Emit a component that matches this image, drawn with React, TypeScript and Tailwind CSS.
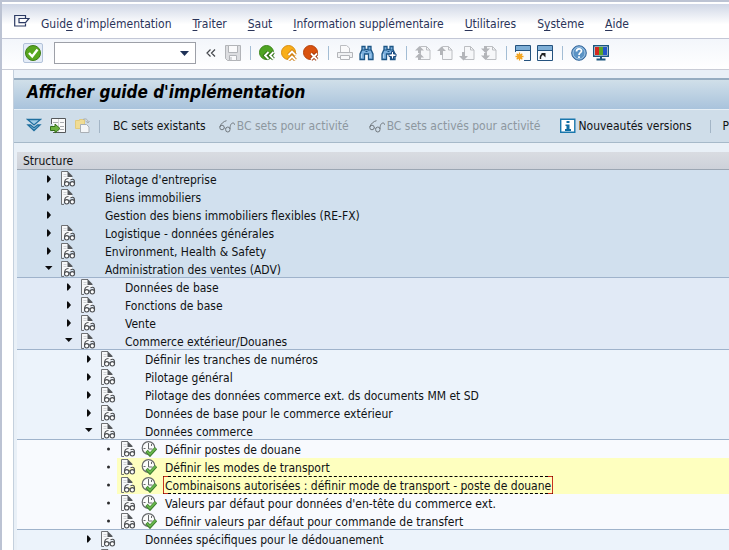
import type { ReactNode } from "react";

type Row = {
  level: 0 | 1 | 2 | 3;
  label: string;
  state: "open" | "closed" | "leaf";
  noDoc?: boolean;
  marked?: boolean;
  focused?: boolean;
  groupEnd?: boolean;
};

const rows: Row[] = [
  { level: 0, label: "Pilotage d'entreprise", state: "closed" },
  { level: 0, label: "Biens immobiliers", state: "closed" },
  { level: 0, label: "Gestion des biens immobiliers flexibles (RE-FX)", state: "closed", noDoc: true },
  { level: 0, label: "Logistique - données générales", state: "closed" },
  { level: 0, label: "Environment, Health & Safety", state: "closed" },
  { level: 0, label: "Administration des ventes (ADV)", state: "open", groupEnd: true },
  { level: 1, label: "Données de base", state: "closed" },
  { level: 1, label: "Fonctions de base", state: "closed" },
  { level: 1, label: "Vente", state: "closed" },
  { level: 1, label: "Commerce extérieur/Douanes", state: "open", groupEnd: true },
  { level: 2, label: "Définir les tranches de numéros", state: "closed" },
  { level: 2, label: "Pilotage général", state: "closed" },
  { level: 2, label: "Pilotage des données commerce ext. ds documents MM et SD", state: "closed" },
  { level: 2, label: "Données de base pour le commerce extérieur", state: "closed" },
  { level: 2, label: "Données commerce", state: "open", groupEnd: true },
  { level: 3, label: "Définir postes de douane", state: "leaf" },
  { level: 3, label: "Définir les modes de transport", state: "leaf", marked: true },
  { level: 3, label: "Combinaisons autorisées : définir mode de transport - poste de douane", state: "leaf", marked: true, focused: true },
  { level: 3, label: "Valeurs par défaut pour données d'en-tête du commerce ext.", state: "leaf" },
  { level: 3, label: "Définir valeurs par défaut pour commande de transfert", state: "leaf", groupEnd: true },
  { level: 2, label: "Données spécifiques pour le dédouanement", state: "closed" },
  { level: 2, label: "", state: "closed" },
];

const levelStyle = [
  "pl-[27px] bg-[#d1e0ee]",
  "pl-[47px] bg-[#e1eaf6]",
  "pl-[67px] bg-[#ecf3fb]",
  "pl-[87px] bg-[#f8fafe]",
];

function Svg({ children, w = 16, h = 16 }: { children: ReactNode; w?: number; h?: number }) {
  return (
    <svg width={w} height={h} viewBox={`0 0 ${w} ${h}`} fill="none" className="block shrink-0" aria-hidden="true">
      {children}
    </svg>
  );
}

function DocIcon() {
  return (
    <Svg>
      <path d="M1.500 15V.5H7.500l4.500 4.500v3" fill="#f7f8f9" />
      <path d="M4 15.500H1.500V.5H8" stroke="#707275" />
      <path d="M7.500 0 12.500 5V6H7.500Z" fill="#55585c" />
      <path d="M3.500 3.500h3M3.500 5.500h3" stroke="#d0d3d6" />
      <path d="M8.500 7.500C5.500 7.500 4.500 9.500 4.500 12.500" stroke="#4c4e51" strokeWidth="1.100" />
      <ellipse cx="6.700" cy="12.800" rx="2.200" ry="2.200" fill="#fff" stroke="#4c4e51" strokeWidth="1.100" />
      <ellipse cx="12.300" cy="12.800" rx="2.200" ry="2.200" fill="#fff" stroke="#4c4e51" strokeWidth="1.100" />
      <path d="M10.500 8.700c2.500-1 4-.2 4 2.300v2M8.800 12h1.500" stroke="#4c4e51" strokeWidth="1.100" />
    </Svg>
  );
}

function ClockIcon() {
  return (
    <Svg>
      <circle cx="7.500" cy="7" r="6.300" fill="#fbfcfb" stroke="#66696b" strokeWidth="1.200" />
      <path d="M7.500 2v6h4M2.500 7.500h2M10.500 3v2" stroke="#66696b" />
      <path d="m5.500 10 3.500 3.700L15 7.200" stroke="#3f7f30" strokeWidth="3.400" />
      <path d="m6 10.300 3 3 5.500-6" stroke="#69b84c" strokeWidth="1.800" />
    </Svg>
  );
}

function Glasses() {
  return (
    <Svg h={13}>
      <path d="M7.500.7C5 1.200 1.500 3.700.8 7.200" stroke="#71787e" />
      <ellipse cx="3" cy="7.500" rx="2.200" ry="2.300" stroke="#71787e" />
      <ellipse cx="8.800" cy="9.500" rx="2.200" ry="2.500" stroke="#71787e" />
      <path d="M5.200 7.500 6.600 8.700M11 9c0-3.500 1-6 3-6 1.200 0 1.500.7 1.500 1.700" stroke="#71787e" />
    </Svg>
  );
}

function Sep() {
  return (
    <span className="flex w-1.5 shrink-0 justify-center">
      <span className="h-[14px] w-px bg-[#a3bdd4]" />
    </span>
  );
}

function Tool({ label, children }: { label: string; children: ReactNode }) {
  return (
    <button type="button" aria-label={label} className="shrink-0">
      {children}
    </button>
  );
}

function Binoculars({ plus = false }: { plus?: boolean }) {
  return (
    <Svg>
      <path
        d="M3 1.500h3v3h3v-3h3v3l2 4.500v5.500H9.500V9h-4v5.500H1V9l2-4.500Z"
        fill="#7fb2df"
        stroke="#1d5686"
        strokeWidth="1.300"
      />
      <path d="M3 5h3M9 5h3M6.500 6.500h2" stroke="#1d5686" />
      <path d="M2.500 9v4M11 9v4" stroke="#b5d6f1" />
      {plus && (
        <path d="M10.500 6.500h2v2.500H15v2.500h-2.500V14h-2v-2.500H8V9h2.500Z" fill="#fff" stroke="#1d4a80" />
      )}
    </Svg>
  );
}

function PageNav({ kind }: { kind: "first" | "prev" | "next" | "last" }) {
  return (
    <Svg>
      <path d="M5.500 1.500h6l3.500 3.500v9.500H5.500Z" fill="#f6f7f9" stroke="#bcbec2" />
      <path d="M11.500 1.500V5H15" stroke="#bcbec2" />
      {kind === "first" && <path d="M0 5.500 4.500 1 9 5.500H6V8h3L4.500 8 9 12.500H6V15H3v-2.500H0L4.500 8H3V5.500Z" fill="#b3b5b9" />}
      {kind === "prev" && <path d="M0 6 4.500 1.500 9 6H6v4H3V6Z" fill="#b3b5b9" />}
      {kind === "next" && <path d="M3 7h3v4h3l-4.500 4.500L0 11h3Z" fill="#b3b5b9" />}
      {kind === "last" && <path d="M3 1h3v2.500h3L4.500 8H6v2.500h3L4.500 15 0 10.500h3V8h1.500L0 3.500h3Z" fill="#b3b5b9" />}
    </Svg>
  );
}

function Ball({ color, edge, children }: { color: string; edge: string; children: ReactNode }) {
  return (
    <Svg>
      <circle cx="7.500" cy="7.500" r="7" fill={color} stroke={edge} />
      {children}
    </Svg>
  );
}

function MenuItem({ before = "", hot, after }: { before?: string; hot: string; after: string }) {
  return (
    <button type="button" className="shrink-0 whitespace-nowrap">
      {before}
      <span className="underline underline-offset-2">{hot}</span>
      {after}
    </button>
  );
}

function MenuBar() {
  return (
    <nav className="flex h-[37px] shrink-0 items-center gap-[21px] border-t-2 border-b border-t-white border-b-[#c3c7d6] bg-linear-to-b from-[#d0d7e6] to-white to-60% pt-1.5 pl-3 text-[#2a3459]">
      <button type="button" aria-label="Menu" className="-mt-1 -mr-2.5 shrink-0">
        <Svg>
          <path d="M11.500 4V1.500H.7v10.500H11.500V9.500" stroke="#2c3a63" strokeWidth="1.200" />
          <path d="M5 4.500h10L11.500 8.700H5Z" fill="#fff" stroke="#2c3a63" strokeWidth="1.200" />
        </Svg>
      </button>
      <MenuItem before="Guid" hot="e" after=" d'implémentation" />
      <MenuItem hot="T" after="raiter" />
      <MenuItem hot="S" after="aut" />
      <MenuItem hot="I" after="nformation supplémentaire" />
      <MenuItem hot="U" after="tilitaires" />
      <MenuItem before="S" hot="y" after="stème" />
      <MenuItem hot="A" after="ide" />
    </nav>
  );
}

function SystemBar() {
  return (
    <div className="flex h-[31px] shrink-0 items-center gap-1.5 border-b border-[#c9ccd6] bg-linear-to-b from-[#f3f6fb] to-white pb-0.5 pl-[21px]">
      <button type="button" aria-label="Valider" className="shrink-0 rounded-xs border border-[#b3c3da] bg-[#e4ecf7] p-px">
        <Svg>
          <circle cx="8" cy="8" r="7.500" fill="#58a61f" stroke="#3f7d16" />
          <path d="m4 8 3.200 3.500L12.500 4.500" stroke="#fff" strokeWidth="2.400" />
        </Svg>
      </button>
      <div className="mr-1 ml-[5px] flex h-[22px] w-[142px] shrink-0 items-center border border-[#9da0a8] bg-white">
        <input aria-label="Commande" className="h-full min-w-0 flex-1 px-1 outline-none" />
        <button type="button" aria-label="Historique" className="mr-1.5">
          <Svg w={9} h={5}>
            <path d="M0 0h9L4.500 5Z" fill="#1f3257" />
          </Svg>
        </button>
      </div>
      <Tool label="Réduire">
        <Svg w={13}>
          <path d="M4.500 4.500 1 8l3.500 3.500M9 4.500 5.500 8l3.500 3.500" stroke="#44474c" strokeWidth="1.200" />
        </Svg>
      </Tool>
      <Tool label="Sauvegarder">
        <Svg>
          <path d="M.5.500h15v15h-13l-2-2Z" fill="#dcdde0" stroke="#b2b4b8" />
          <path d="M3.500.500h9v7h-9Z" fill="#fafafb" stroke="#b2b4b8" />
          <path d="M4.500 10.500h7v5h-7Z" fill="#fafafb" stroke="#b2b4b8" />
          <path d="M6 12v3" stroke="#b2b4b8" />
        </Svg>
      </Tool>
      <Sep />
      <Tool label="Retour">
        <Ball color="#4fa423" edge="#3c861a">
          <path d="M9.500 7 6 10.500 9.500 14M14.500 7 11 10.500l3.500 3.500" stroke="#2f6d14" strokeWidth="3.600" />
          <path d="M9.500 7 6 10.500 9.500 14M14.500 7 11 10.500l3.500 3.500" stroke="#fff" strokeWidth="1.800" />
        </Ball>
      </Tool>
      <Tool label="Terminer">
        <Ball color="#f8ae1a" edge="#d98d10">
          <path d="m7.500 10 3.500-3.500 3.500 3.500M7.500 15l3.500-3.500 3.500 3.500" stroke="#cf7d10" strokeWidth="3.600" />
          <path d="m7.500 10 3.500-3.500 3.500 3.500M7.500 15l3.500-3.500 3.500 3.500" stroke="#fff" strokeWidth="1.800" />
        </Ball>
      </Tool>
      <Tool label="Interrompre">
        <Ball color="#d9520f" edge="#b5420c">
          <path d="m8 8.500 6 6M14 8.500l-6 6" stroke="#9c2f06" strokeWidth="3.600" />
          <path d="m8 8.500 6 6M14 8.500l-6 6" stroke="#fff" strokeWidth="1.800" />
        </Ball>
      </Tool>
      <Sep />
      <Tool label="Imprimer">
        <Svg>
          <path d="M3.500 7V.5h6L12.500 3v4" fill="#fafafb" stroke="#bcbec2" />
          <path d="M.5 7.500h15v5H.5Z" fill="#f0f1f3" stroke="#b4b6ba" />
          <path d="M3.500 10.500h9v4h-9Z" fill="#fafafb" stroke="#b4b6ba" />
        </Svg>
      </Tool>
      <Tool label="Rechercher"><Binoculars /></Tool>
      <Tool label="Poursuivre la recherche"><Binoculars plus /></Tool>
      <Sep />
      <Tool label="Première page"><PageNav kind="first" /></Tool>
      <Tool label="Page précédente"><PageNav kind="prev" /></Tool>
      <Tool label="Page suivante"><PageNav kind="next" /></Tool>
      <Tool label="Dernière page"><PageNav kind="last" /></Tool>
      <Sep />
      <Tool label="Nouveau mode">
        <Svg>
          <path d="M.5.500h15v15H.5Z" fill="#f7fafd" stroke="#24527e" />
          <path d="M1 1h14v4H1Z" fill="#7daed6" />
          <path d="M1 5.500h14" stroke="#24527e" />
          <path d="M-1 7h10v10H-1Z" fill="#fbfcfe" />
          <path d="M4.500 7.500v8M.5 11.500h8M1.700 8.700l5.600 5.600M7.300 8.700l-5.600 5.600" stroke="#f2a21b" strokeWidth="1.300" />
          <circle cx="4.500" cy="11.500" r="2.500" fill="#f5a623" />
        </Svg>
      </Tool>
      <Tool label="Créer un raccourci">
        <Svg>
          <path d="M.5.500h15v15H.5Z" fill="#f7fafd" stroke="#24527e" />
          <path d="M1 1h14v4H1Z" fill="#7daed6" />
          <path d="M1 5.500h14" stroke="#24527e" />
          <path d="M3.500 14c-.5-3 1-4.500 3-5" stroke="#222" strokeWidth="1.500" />
          <path d="M4 8h4.500V12.500Z" fill="#222" />
        </Svg>
      </Tool>
      <Sep />
      <Tool label="Aide">
        <Svg>
          <circle cx="8" cy="8" r="7.300" fill="#5b93c5" stroke="#33659a" />
          <circle cx="8" cy="8" r="6" stroke="#a5c8e6" />
          <path d="M5.500 6.500C5.500 3 10.700 3.200 10.500 6c-.1 1.700-2.500 1.700-2.500 4M8 11.200v1.800" stroke="#fff" strokeWidth="1.700" />
        </Svg>
      </Tool>
      <Tool label="Adapter la présentation locale">
        <Svg>
          <path d="M.7.700h14.600v10.600H.7Z" fill="#fff" stroke="#1b567f" strokeWidth="1.400" />
          <path d="M2 2h4v8H2Z" fill="#d2281e" />
          <path d="M6 2h4v8H6Z" fill="#58a82a" />
          <path d="M10 2h4v8h-4Z" fill="#2457c8" />
          <path d="M8 11v3M3.500 14.500h9" stroke="#1b567f" strokeWidth="2" />
        </Svg>
      </Tool>
    </div>
  );
}

function AppBar() {
  return (
    <div className="flex h-[34px] shrink-0 items-center border-t border-b border-t-[#e6eff6] border-b-[#a6b9c9] bg-[#cfdde9] pl-3 whitespace-nowrap">
      <div className="flex items-center gap-2">
        <Tool label="Développer">
          <Svg>
            <path d="M1.500 1.500h13L8 7Z" fill="#9fcbe6" stroke="#1f6f9f" strokeWidth="1.300" />
            <path d="M2 7 8 12.500 14 7h-2.500L8 9.800 4.500 7Z" fill="#9fcbe6" stroke="#1f6f9f" strokeWidth="1.300" />
          </Svg>
        </Tool>
        <Tool label="Positionner">
          <Svg>
            <path d="M1.500.500h14v14h-14Z" fill="#fafbfb" stroke="#55585b" />
            <path d="M3 4.500h5M10 4.500h4M10 8.500h4M10 11.500h4" stroke="#a9acb0" />
            <path d="M8.500 1v13" stroke="#d3d5d7" />
            <path d="M0 6h3v9H0Z" fill="#cfdde9" />
            <path d="M.5 8.500H5V6l5 4.500L5 15v-2.500H.5Z" fill="#6bb13f" stroke="#356f1c" />
          </Svg>
        </Tool>
        <Tool label="Autre structure">
          <Svg>
            <path d="M1.500 2.500h4v-1h5v9h-9Z" fill="#f0dc94" stroke="#e2cb7c" />
            <path d="M6.500 6.500h6l2.500 2.500v5.500h-8.500Z" fill="#f4f6f8" stroke="#a9afb5" />
            <path d="M9 1.500c3-1.500 5 0 5 3M11.500 3l2.500 2 1.500-2" stroke="#a9afb5" />
          </Svg>
        </Tool>
      </div>
      <span className="ml-[9px] h-[13px] w-px shrink-0 bg-[#a3b5c6]" />
      <button type="button" className="ml-[13px]">BC sets existants</button>
      <button type="button" disabled className="ml-[13px] flex items-center gap-0.5 text-[#8d979f]">
        <Glasses />
        BC sets pour activité
      </button>
      <button type="button" disabled className="ml-5 flex items-center gap-0.5 text-[#8d979f]">
        <Glasses />
        BC sets activés pour activité
      </button>
      <button type="button" className="ml-5 flex items-center gap-0.5">
        <Svg>
          <path d="M.7 1.200h14.100v13.100H.7Z" fill="#fff" stroke="#1977ad" strokeWidth="1.400" />
          <path d="M6.500 3h3v2h-3ZM5.500 6.500h4v4.500H11v2H5v-2h1.500V8h-1Z" fill="#0f6da3" />
        </Svg>
        Nouveautés versions
      </button>
      <span className="ml-[18px] h-[13px] w-px shrink-0 bg-[#a3b5c6]" />
      <button type="button" className="ml-3">P</button>
    </div>
  );
}

function Marker({ state }: { state: Row["state"] }) {
  return (
    <Svg w={12} h={12}>
      {state === "closed" && <path d="M3 2.500h1L7 6l-3 3.500H3Z" fill="#0b0b0c" />}
      {state === "open" && <path d="M1 3h7.500L4.750 7Z" fill="#0b0b0c" />}
      {state === "leaf" && <circle cx="4.500" cy="6" r="1.500" fill="#2b2b2d" />}
    </Svg>
  );
}

function TreeRow({ row }: { row: Row }) {
  return (
    <li className={`flex h-[18px] items-stretch ${levelStyle[row.level]} ${row.groupEnd ? "border-b border-[#9fb3cb]" : ""}`}>
      <span className="mr-px flex w-3 shrink-0 items-center">
        <Marker state={row.state} />
      </span>
      <div className={`flex flex-1 items-center pl-[3px] ${row.marked ? "bg-[#feffbf]" : ""}`}>
        <span className="w-5 shrink-0">{!row.noDoc && <DocIcon />}</span>
        <span className="w-5 shrink-0 pl-px">{row.state === "leaf" && <ClockIcon />}</span>
        <span
          className={`relative ml-[3px] flex h-[18px] items-center border px-px pt-0.5 whitespace-nowrap ${
            row.focused ? "border-x-[#c8321e] border-y-black [border-block-style:dashed]" : "border-transparent"
          }`}
        >
          {row.label}
          {row.focused && (
            <>
              <i className="absolute -top-px left-0 h-px w-1 bg-[#c8321e]" />
              <i className="absolute -top-px right-0 h-px w-1 bg-[#c8321e]" />
              <i className="absolute -bottom-px left-0 h-px w-1 bg-[#c8321e]" />
              <i className="absolute right-0 -bottom-px h-px w-1 bg-[#c8321e]" />
            </>
          )}
        </span>
      </div>
    </li>
  );
}

export default function App() {
  return (
    <div className="flex h-screen flex-col overflow-hidden border-t-2 border-l-2 border-[#bcc3d3] bg-white font-['DejaVu_Sans_Condensed','DejaVu_Sans',sans-serif] text-[12px] leading-4 text-[#101214]">
      <MenuBar />
      <SystemBar />
      <main className="ml-[11px] flex min-h-0 flex-1 flex-col border-l border-[#c4d0dd] bg-[#e9f0f7] pt-2">
        <h1 className="flex h-[31px] shrink-0 items-center border-t-2 border-[#96adc1] bg-linear-to-b from-[#d0dfe9] to-[#a9c3dc] pb-1.5 pl-[13px] text-[17px] font-bold text-black italic">
          Afficher guide d'implémentation
        </h1>
        <AppBar />
        <section className="mt-[9px] ml-[3px]">
          <h2 className="flex h-[18px] items-center border-b border-[#9ba6b3] bg-linear-to-b from-[#d9dce2] to-[#cdd1d9] pl-1.5">
            Structure
          </h2>
          <ul>
            {rows.map((row, i) => (
              <TreeRow key={i} row={row} />
            ))}
          </ul>
        </section>
      </main>
    </div>
  );
}
